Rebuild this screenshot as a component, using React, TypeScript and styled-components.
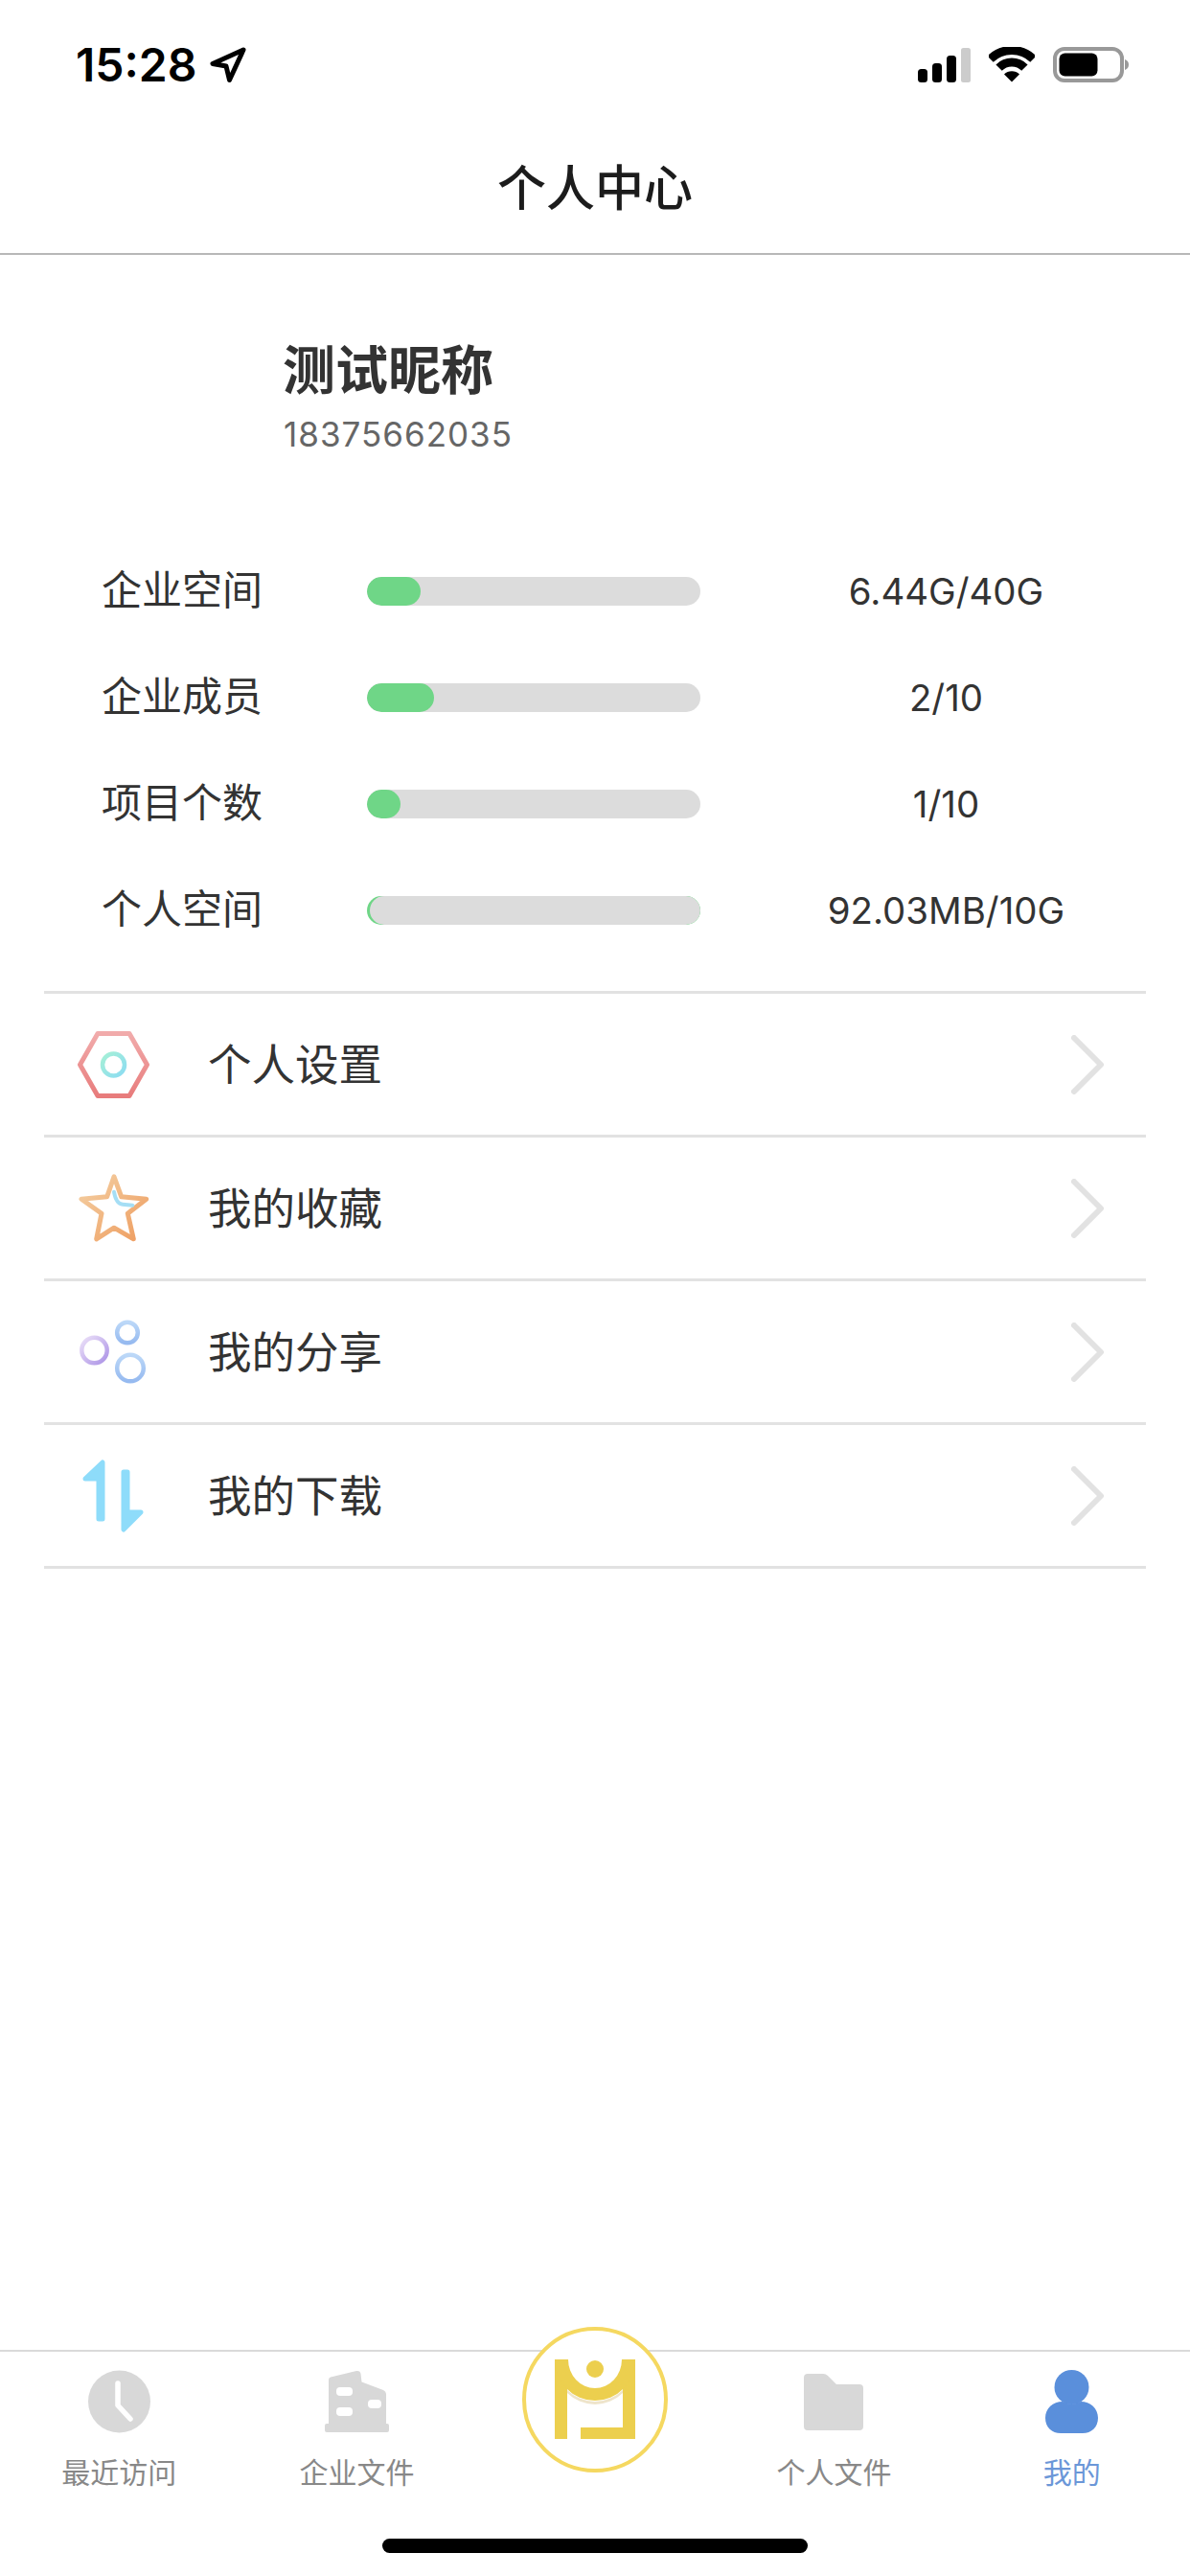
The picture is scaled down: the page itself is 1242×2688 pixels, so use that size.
import { createGlobalStyle } from "styled-components";
import styled from "styled-components";

const GlobalStyle = createGlobalStyle`
    html, body {
        margin: 0;
        padding: 0;
        background: #fff;
    }
    body {
        font-family: "Inter", "Noto Sans CJK SC", sans-serif;
    }
`;

const Page = styled.div`
    width: 1242px;
    height: 2688px;
    display: flex;
    flex-direction: column;
    background: #fff;
    overflow: hidden;
`;

const StatusBar = styled.div`
    height: 132px;
    box-sizing: border-box;
    padding: 49px 64px 0 79px;
    display: flex;
    justify-content: space-between;
    align-items: flex-start;
`;
const TimeGroup = styled.div`
    display: flex;
    align-items: center;
    gap: 14px;
    height: 37px;
`;
const Time = styled.span`
    font-size: 48px;
    font-weight: 600;
    line-height: 37px;
    color: #000;
`;
const StatusIcons = styled.div`
    display: flex;
    align-items: center;
    gap: 19px;
`;

const Header = styled.div`
    height: 134px;
    box-sizing: border-box;
    padding-bottom: 10px;
    display: flex;
    align-items: center;
    justify-content: center;
    border-bottom: 2px solid #b8b8b8;
    font-size: 51px;
    font-weight: 500;
    color: #1c1c1c;
`;

const Profile = styled.div`
    padding: 85px 0 0 295px;
    height: 208px;
    box-sizing: border-box;
`;
const Nickname = styled.div`
    font-size: 55px;
    line-height: 70px;
    font-weight: 700;
    color: #333;
`;
const Phone = styled.div`
    margin-top: -3px;
    padding-left: 1px;
    font-size: 35px;
    line-height: 70px;
    color: #666;
    letter-spacing: 1px;
`;

const Stats = styled.div`
    padding-left: 106px;
    margin-top: 87px;
`;
const StatRow = styled.div`
    height: 111px;
    display: grid;
    grid-template-columns: 277px 348px 1fr;
    align-items: center;
`;
const StatLabel = styled.div`
    padding-bottom: 8px;
    font-size: 42px;
    color: #333;
`;
const Track = styled.div<{ $sliver?: boolean }>`
    height: 30px;
    border-radius: 15px;
    overflow: hidden;
    display: flex;
    background: ${props => (props.$sliver ? "#6fd687" : "#dcdcdc")};
`;
const Fill = styled.div`
    height: 100%;
    border-radius: 15px;
    background: #6fd687;
`;
const SliverRest = styled.div`
    margin-left: 3px;
    flex: 1;
    border-radius: 15px;
    background: #dcdcdc;
`;
const StatValue = styled.div`
    padding-left: 2px;
    text-align: center;
    font-size: 38.4px;
    color: #333;
`;

const Menu = styled.div`
    margin: 29px 46px 0;
    border-top: 3px solid #e2e2e2;
`;
const MenuRow = styled.div`
    height: 147px;
    display: flex;
    align-items: center;
    padding: 0 42px 0 35px;
    border-bottom: 3px solid #e2e2e2;
`;
const MenuIcon = styled.div`
    width: 75px;
    height: 80px;
    display: flex;
    align-items: center;
    justify-content: center;
`;
const MenuText = styled.div`
    flex: 1;
    margin-left: 61px;
    padding-bottom: 6px;
    font-size: 45.5px;
    color: #333;
`;

const TabBar = styled.div`
    position: relative;
    margin-top: auto;
    height: 236px;
    box-sizing: border-box;
    border-top: 2px solid #dadada;
    display: grid;
    grid-template-columns: repeat(5, 1fr);
    align-items: start;
`;
const Tab = styled.div<{ $active?: boolean; $shift?: number }>`
    display: flex;
    flex-direction: column;
    align-items: center;
    padding-top: 19px;
    margin-left: ${props => props.$shift || 0}px;
    color: ${props => (props.$active ? "#6b97d8" : "#888")};
    font-size: 30px;
`;
const TabIcon = styled.div`
    height: 66px;
    display: flex;
    align-items: center;
    justify-content: center;
`;
const TabLabel = styled.div`
    margin-top: 26px;
    line-height: 30px;
`;
const CenterButton = styled.div`
    position: absolute;
    top: -26px;
    left: 50%;
    transform: translateX(-50%);
    width: 152px;
    height: 152px;
    box-sizing: border-box;
    border: 4px solid #f5d860;
    border-radius: 50%;
    background: #fff;
`;
const HomeIndicator = styled.div`
    position: absolute;
    bottom: 24px;
    left: 399px;
    width: 444px;
    height: 15px;
    border-radius: 8px;
    background: #000;
`;

const stats = [
    { label: "企业空间", fill: 56, value: "6.44G/40G" },
    { label: "企业成员", fill: 70, value: "2/10" },
    { label: "项目个数", fill: 35, value: "1/10" },
    { label: "个人空间", fill: 0, value: "92.03MB/10G" },
];

function LocationArrow() {
    return (
        <svg width="38" height="38" viewBox="0 0 38 38">
            <path d="M35 3 L3 17.5 L17 20 L20.5 34.5 Z" fill="none" stroke="#000" strokeWidth="5" strokeLinejoin="round" />
        </svg>
    );
}

function Signal() {
    return (
        <svg width="56" height="36" viewBox="0 0 56 36">
            <rect x="1" y="22" width="10" height="14" rx="3.5" fill="#000" />
            <rect x="16" y="16" width="10" height="20" rx="3.5" fill="#000" />
            <rect x="31" y="8" width="10" height="28" rx="3.5" fill="#000" />
            <rect x="46" y="0" width="10" height="36" rx="2.5" fill="#cccccc" />
        </svg>
    );
}

function Wifi() {
    return (
        <svg width="48" height="37" viewBox="0 0 48 37">
            <path d="M1.6 12.6 A32 32 0 0 1 46.4 12.6" fill="none" stroke="#000" strokeWidth="9" />
            <path d="M10.6 21.6 A19 19 0 0 1 37.4 21.6" fill="none" stroke="#000" strokeWidth="9" />
            <path d="M24 36.5 L16 28.5 A11.5 11.5 0 0 1 32 28.5 Z" fill="#000" />
        </svg>
    );
}

function Battery() {
    return (
        <svg width="79" height="37" viewBox="0 0 79 37">
            <rect x="2" y="2" width="70" height="33" rx="10" fill="none" stroke="#999" strokeWidth="4" />
            <rect x="6.5" y="6.5" width="40" height="24" rx="6" fill="#000" />
            <path d="M75 13 C78 14 79 16 79 18.5 C79 21 78 23 75 24 Z" fill="#999" />
        </svg>
    );
}

function HexIcon() {
    return (
        <svg width="75" height="70" viewBox="0 0 75 70">
            <defs>
                <linearGradient id="hexLine" x1="0" y1="0" x2="0" y2="1">
                    <stop offset="0" stopColor="#f1abab" />
                    <stop offset="1" stopColor="#e87c7c" />
                </linearGradient>
                <linearGradient id="hexRing" x1="0" y1="0" x2="1" y2="1">
                    <stop offset="0" stopColor="#a6f0d6" />
                    <stop offset="1" stopColor="#8cdcf2" />
                </linearGradient>
            </defs>
            <path d="M21 2.5 L54 2.5 L72.5 35 L54 67.5 L21 67.5 L2.5 35 Z" fill="none" stroke="url(#hexLine)" strokeWidth="5" strokeLinejoin="round" />
            <circle cx="37.5" cy="35" r="11.5" fill="none" stroke="url(#hexRing)" strokeWidth="4.5" />
        </svg>
    );
}

function StarIcon() {
    return (
        <svg width="75" height="76" viewBox="0 0 75 76">
            <defs>
                <linearGradient id="starLine" x1="0" y1="0" x2="1" y2="1">
                    <stop offset="0" stopColor="#f4d0a4" />
                    <stop offset="1" stopColor="#ee9d60" />
                </linearGradient>
            </defs>
            <path
                d="M38 4.8 L45.7 25.8 L71.7 28.2 L52.3 43.2 L58.3 69.8 L38 58.2 L19.7 69.8 L25 43.2 L4 28.2 L30.7 25.8 Z"
                fill="none"
                stroke="url(#starLine)"
                strokeWidth="5"
                strokeLinejoin="round"
            />
            <path d="M38 20.8 Q40 33 47 33.8 L57.3 34.8" fill="none" stroke="#a5def5" strokeWidth="4" strokeLinecap="round" />
        </svg>
    );
}

function ShareIcon() {
    return (
        <svg width="75" height="70" viewBox="0 0 75 70">
            <defs>
                <linearGradient id="sharePurple" x1="0" y1="0" x2="1" y2="1">
                    <stop offset="0" stopColor="#ebe0f8" />
                    <stop offset="1" stopColor="#ac93e6" />
                </linearGradient>
                <linearGradient id="shareBlue" x1="0" y1="0" x2="0" y2="1">
                    <stop offset="0" stopColor="#bcd8f8" />
                    <stop offset="1" stopColor="#96baf0" />
                </linearGradient>
            </defs>
            <circle cx="17.5" cy="33" r="13.2" fill="none" stroke="url(#sharePurple)" strokeWidth="4.5" />
            <circle cx="52" cy="14.5" r="10.8" fill="none" stroke="url(#shareBlue)" strokeWidth="4.5" />
            <circle cx="55" cy="51.5" r="13.8" fill="none" stroke="url(#shareBlue)" strokeWidth="4.5" />
        </svg>
    );
}

function TransferIcon() {
    return (
        <svg width="75" height="80" viewBox="0 0 75 80">
            <path
                d="M26 5 L26 64 L22 64 L22 22 L8 22 Z"
                fill="#8edcfa"
                stroke="#8edcfa"
                strokeWidth="5"
                strokeLinejoin="round"
            />
            <path
                d="M48 15 L52 15 L52 57 L66 57 L48 75 Z"
                fill="#8edcfa"
                stroke="#8edcfa"
                strokeWidth="5"
                strokeLinejoin="round"
            />
        </svg>
    );
}

function Chevron() {
    return (
        <svg width="36" height="62" viewBox="0 0 36 62">
            <path d="M3 3 L31 31 L3 59" fill="none" stroke="#e2e2e2" strokeWidth="6" strokeLinecap="round" strokeLinejoin="round" />
        </svg>
    );
}

function ClockIcon() {
    return (
        <svg width="65" height="66" viewBox="0 0 65 66">
            <circle cx="32.5" cy="33" r="32.5" fill="#d8d8d8" />
            <path d="M31 14 L31 37 L44 51" fill="none" stroke="#fff" strokeWidth="5.5" strokeLinecap="round" strokeLinejoin="round" />
        </svg>
    );
}

function BuildingIcon() {
    return (
        <svg width="67" height="66" viewBox="0 0 67 66">
            <path
                d="M4 59 L4 10 Q4 8 6 7.5 L33 1 Q37 0.5 37.5 4 L38.5 12.5 L61 21 Q64 22.5 64 25 L64 59 Z"
                fill="#d8d8d8"
            />
            <rect x="0" y="56" width="67" height="9" rx="2" fill="#d8d8d8" />
            <rect x="12" y="18" width="17" height="9" rx="4" fill="#fff" />
            <rect x="12" y="39" width="17" height="9" rx="4" fill="#fff" />
            <rect x="45" y="31" width="14" height="9" rx="4" fill="#fff" />
        </svg>
    );
}

function FolderIcon() {
    return (
        <svg width="62" height="59" viewBox="0 0 62 59">
            <path
                d="M0 4 Q0 0 4 0 L20 0 Q23 0 25 2 L34 11 L58 11 Q62 11 62 15 L62 55 Q62 59 58 59 L4 59 Q0 59 0 55 Z"
                fill="#d8d8d8"
            />
        </svg>
    );
}

function PersonIcon() {
    return (
        <svg width="55" height="66" viewBox="0 0 55 66">
            <ellipse cx="27.5" cy="18" rx="18" ry="18" fill="#5a8fdb" />
            <path
                d="M18 33 Q27.5 38 37 33 C47 33 55 40 55 50 C55 60 48 66 39 66 L16 66 C7 66 0 60 0 50 C0 40 8 33 18 33 Z"
                fill="#5a8fdb"
            />
        </svg>
    );
}

function Logo() {
    return (
        <svg width="144" height="144" viewBox="4 4 144 144">
            <path d="M34 34 L47 34 L47 117 L34 117 Z" fill="#eccf4e" />
            <path d="M105 34 L118 34 L118 117 L61 117 L61 105 L105 105 Z" fill="#eccf4e" />
            <path d="M47 66 A42 43 0 0 0 105 66 L105 69 A42 43 0 0 1 47 69 Z" fill="#d9c48a" opacity="0.45" />
            <path d="M34 34 L48 34 A28 30 0 0 0 104 34 L118 34 A42 43 0 0 1 34 34 Z" fill="#eccf4e" />
            <circle cx="76" cy="44" r="9" fill="#eccf4e" />
        </svg>
    );
}

const menu = [
    { text: "个人设置", icon: <HexIcon /> },
    { text: "我的收藏", icon: <StarIcon /> },
    { text: "我的分享", icon: <ShareIcon /> },
    { text: "我的下载", icon: <TransferIcon /> },
];

function App() {
    return (
        <Page>
            <GlobalStyle />
            <StatusBar>
                <TimeGroup>
                    <Time>15:28</Time>
                    <LocationArrow />
                </TimeGroup>
                <StatusIcons>
                    <Signal />
                    <Wifi />
                    <Battery />
                </StatusIcons>
            </StatusBar>
            <Header>个人中心</Header>
            <Profile>
                <Nickname>测试昵称</Nickname>
                <Phone>18375662035</Phone>
            </Profile>
            <Stats>
                {stats.map(item => (
                    <StatRow key={item.label}>
                        <StatLabel>{item.label}</StatLabel>
                        {item.fill > 0 ? (
                            <Track>
                                <Fill style={{ width: item.fill }} />
                            </Track>
                        ) : (
                            <Track $sliver>
                                <SliverRest />
                            </Track>
                        )}
                        <StatValue>{item.value}</StatValue>
                    </StatRow>
                ))}
            </Stats>
            <Menu>
                {menu.map(item => (
                    <MenuRow key={item.text}>
                        <MenuIcon>{item.icon}</MenuIcon>
                        <MenuText>{item.text}</MenuText>
                        <Chevron />
                    </MenuRow>
                ))}
            </Menu>
            <TabBar>
                <Tab>
                    <TabIcon><ClockIcon /></TabIcon>
                    <TabLabel>最近访问</TabLabel>
                </Tab>
                <Tab>
                    <TabIcon><BuildingIcon /></TabIcon>
                    <TabLabel>企业文件</TabLabel>
                </Tab>
                <div />
                <Tab $shift={2}>
                    <TabIcon><FolderIcon /></TabIcon>
                    <TabLabel>个人文件</TabLabel>
                </Tab>
                <Tab $active $shift={2}>
                    <TabIcon><PersonIcon /></TabIcon>
                    <TabLabel>我的</TabLabel>
                </Tab>
                <CenterButton>
                    <Logo />
                </CenterButton>
                <HomeIndicator />
            </TabBar>
        </Page>
    );
}

export default App;
